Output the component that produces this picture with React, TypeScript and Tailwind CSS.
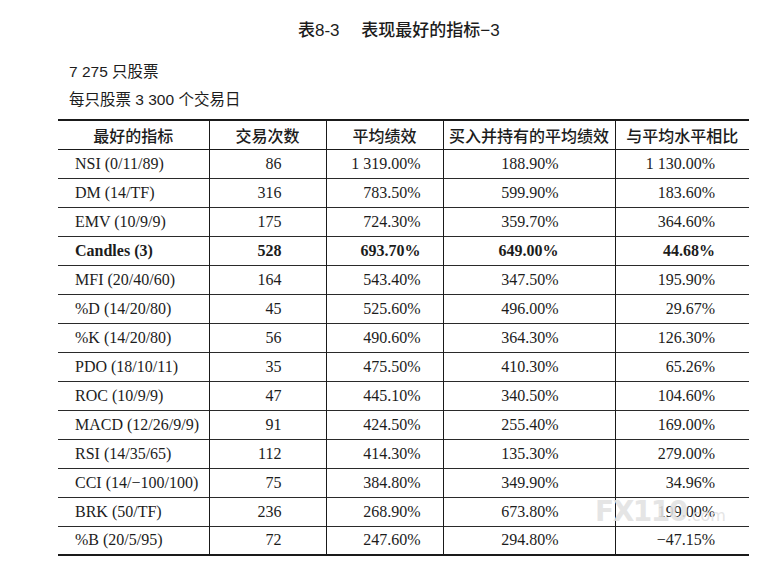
import React from "react";

type Row = { name: string; trades: string; avg: string; bh: string; diff: string; bold?: boolean };

const rows: Row[] = [
  { name: "NSI (0/11/89)", trades: "86", avg: "1 319.00%", bh: "188.90%", diff: "1 130.00%" },
  { name: "DM (14/TF)", trades: "316", avg: "783.50%", bh: "599.90%", diff: "183.60%" },
  { name: "EMV (10/9/9)", trades: "175", avg: "724.30%", bh: "359.70%", diff: "364.60%" },
  { name: "Candles (3)", trades: "528", avg: "693.70%", bh: "649.00%", diff: "44.68%", bold: true },
  { name: "MFI (20/40/60)", trades: "164", avg: "543.40%", bh: "347.50%", diff: "195.90%" },
  { name: "%D (14/20/80)", trades: "45", avg: "525.60%", bh: "496.00%", diff: "29.67%" },
  { name: "%K (14/20/80)", trades: "56", avg: "490.60%", bh: "364.30%", diff: "126.30%" },
  { name: "PDO (18/10/11)", trades: "35", avg: "475.50%", bh: "410.30%", diff: "65.26%" },
  { name: "ROC (10/9/9)", trades: "47", avg: "445.10%", bh: "340.50%", diff: "104.60%" },
  { name: "MACD (12/26/9/9)", trades: "91", avg: "424.50%", bh: "255.40%", diff: "169.00%" },
  { name: "RSI (14/35/65)", trades: "112", avg: "414.30%", bh: "135.30%", diff: "279.00%" },
  { name: "CCI (14/\u2212100/100)", trades: "75", avg: "384.80%", bh: "349.90%", diff: "34.96%" },
  { name: "BRK (50/TF)", trades: "236", avg: "268.90%", bh: "673.80%", diff: "199.00%" },
  { name: "%B (20/5/95)", trades: "72", avg: "247.60%", bh: "294.80%", diff: "\u221247.15%" },
];

const headers = ["最好的指标", "交易次数", "平均绩效", "买入并持有的平均绩效", "与平均水平相比"];

export default function App() {
  return (
    <div className="relative w-[779px] h-[566px] bg-white text-[#1c1c1c] overflow-hidden">
      <div className="pt-[21px] pl-[298px] h-[41px] text-[17px] leading-[20px] font-medium font-['Liberation_Sans','Noto_Sans_CJK_SC',sans-serif] whitespace-pre">
        {"表8-3\u3000 表现最好的指标\u22123"}
      </div>
      <div className="mt-[21px] pl-[69px] flex flex-col gap-[8px] text-[15.5px] leading-[20px] font-['Liberation_Sans','Noto_Sans_CJK_SC',sans-serif]">
        <div>7 275 只股票</div>
        <div>每只股票 3 300 个交易日</div>
      </div>
      <table className="mt-[9px] ml-[58px] w-[691px] border-collapse table-fixed border-t-2 border-b-2 border-[#1a1a1a]">
        <colgroup>
          <col className="w-[151px]" />
          <col className="w-[117px]" />
          <col className="w-[117px]" />
          <col className="w-[172px]" />
          <col className="w-[134px]" />
        </colgroup>
        <thead>
          <tr className="h-[29px] border-b border-[#1a1a1a]">
            {headers.map((h, i) => (
              <th
                key={h}
                className={`p-0 text-center text-[16px] leading-[20px] font-medium font-['Noto_Sans_CJK_SC',sans-serif] ${i > 0 ? "border-l border-[#1a1a1a]" : ""}`}
              >
                {h}
              </th>
            ))}
          </tr>
        </thead>
        <tbody className="font-['Liberation_Serif',serif] text-[16px] leading-[20px]">
          {rows.map((r, idx) => (
            <tr
              key={r.name}
              className={`h-[29px] ${idx < rows.length - 1 ? "border-b border-[#2a2a2a]" : ""} ${r.bold ? "font-bold" : ""}`}
            >
              <td className="p-0 pl-[17px] text-left whitespace-nowrap">{r.name}</td>
              <td className="p-0 pr-[44px] text-right border-l border-[#1a1a1a]">{r.trades}</td>
              <td className="p-0 pr-[22px] text-right border-l border-[#1a1a1a]">{r.avg}</td>
              <td className="p-0 pr-[56px] text-right border-l border-[#1a1a1a]">{r.bh}</td>
              <td className="p-0 pr-[34px] text-right border-l border-[#1a1a1a]">{r.diff}</td>
            </tr>
          ))}
        </tbody>
      </table>
      <div className="absolute left-[595px] top-[497px] flex items-baseline font-['DejaVu_Sans',sans-serif] font-bold text-[#e2e2e2]/90 pointer-events-none">
        <span className="text-[28px] leading-[30px] tracking-[-1.5px]">FX110</span>
        <span className="text-[16px] leading-[20px] font-normal">.com</span>
      </div>
    </div>
  );
}
